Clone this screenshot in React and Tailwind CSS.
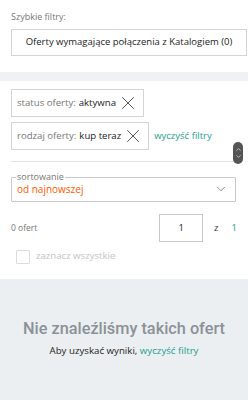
import { X, ChevronDown, ChevronUp } from 'lucide-react';

const Chip = ({ label, value }) => (
  <div className="h-[28px] flex items-center border border-[#d4d4d4] pl-[5px] pr-[4px] w-fit">
    <span className="text-[9.6px] text-[#767676]">{label}</span>
    <span className="text-[9.6px] text-[#222] ml-[3px]">{value}</span>
    <X size={22} strokeWidth={1} className="ml-[1px] text-[#444]" />
  </div>
);

export default function App() {
  return (
    <div className="w-[248px] h-[400px] bg-white flex flex-col overflow-hidden relative" style={{ fontFamily: '"Open Sans", sans-serif' }}>
      <div className="pl-[11px] pr-[1px] pt-[10px] pb-[16px]">
        <p className="text-[9px] text-[#767676] leading-[14px]">Szybkie filtry:</p>
        <div className="mt-[5px] h-[27px] border border-[#d4d4d4] flex items-center justify-center">
          <span className="text-[9.5px] text-[#222]">Oferty wymagające połączenia z Katalogiem (0)</span>
        </div>
      </div>
      <div className="h-[9px] bg-[#eff1f4]" />

      <div className="px-[11px] pt-[8px]">
        <div className="flex flex-col gap-[5px]">
          <Chip label="status oferty:" value="aktywna" />
          <div className="flex items-center">
            <Chip label="rodzaj oferty:" value="kup teraz" />
            <span className="ml-[5px] text-[9.5px] text-[#1a9e8c]">wyczyść filtry</span>
          </div>
        </div>
        <div className="mt-[11px] h-px bg-[#e2e2e2] mr-[4px]" />

        <fieldset className="mt-[9px] border border-[#c8c8c8] h-[31px] px-[5px] rounded-[1px] mr-[1px]">
          <legend className="text-[9px] text-[#767676] px-[1px] leading-[12px] -ml-[1px]">sortowanie</legend>
          <div className="flex items-center justify-between h-[12px]">
            <span className="text-[10px] leading-[12px] text-[#ff5a00]">od najnowszej</span>
            <ChevronDown size={14} strokeWidth={1.2} className="text-[#555] mr-[2px]" />
          </div>
        </fieldset>

        <div className="mt-[12px] flex items-center h-[28px]">
          <span className="text-[8.5px] text-[#767676]">0 ofert</span>
          <div className="ml-auto w-[44px] h-[28px] border border-[#c8c8c8] flex items-center justify-center text-[9.5px] text-[#222]">1</div>
          <span className="ml-[11px] text-[9.5px] text-[#333]">z</span>
          <span className="ml-[13px] text-[9.5px] text-[#1a9e8c]">1</span>
        </div>

        <div className="mt-[7px] flex items-center pl-[5px] h-[15px]">
          <div className="w-[14px] h-[14px] border border-[#dcdcdc] rounded-[1px]" />
          <span className="ml-[6px] text-[9.6px] text-[#c4c4c4]">zaznacz wszystkie</span>
        </div>
      </div>

      <div className="mt-[15px] flex-1 bg-[#eceff2] flex flex-col items-center pt-[38px]">
        <p className="text-[16.3px] font-medium text-[#8b9197]" style={{ fontFamily: 'Roboto, sans-serif' }}>Nie znaleźliśmy takich ofert</p>
        <p className="mt-[3px] text-[9.7px] text-[#222]">
          Aby uzyskać wyniki, <span className="text-[#1a9e8c]">wyczyść filtry</span>
        </p>
      </div>

      <div className="absolute left-[233px] top-[142px] w-[10px] h-[22px] rounded-full bg-[#555] flex flex-col items-center justify-center text-white">
        <ChevronUp size={7} strokeWidth={2} />
        <ChevronDown size={7} strokeWidth={2} />
      </div>
    </div>
  );
}
